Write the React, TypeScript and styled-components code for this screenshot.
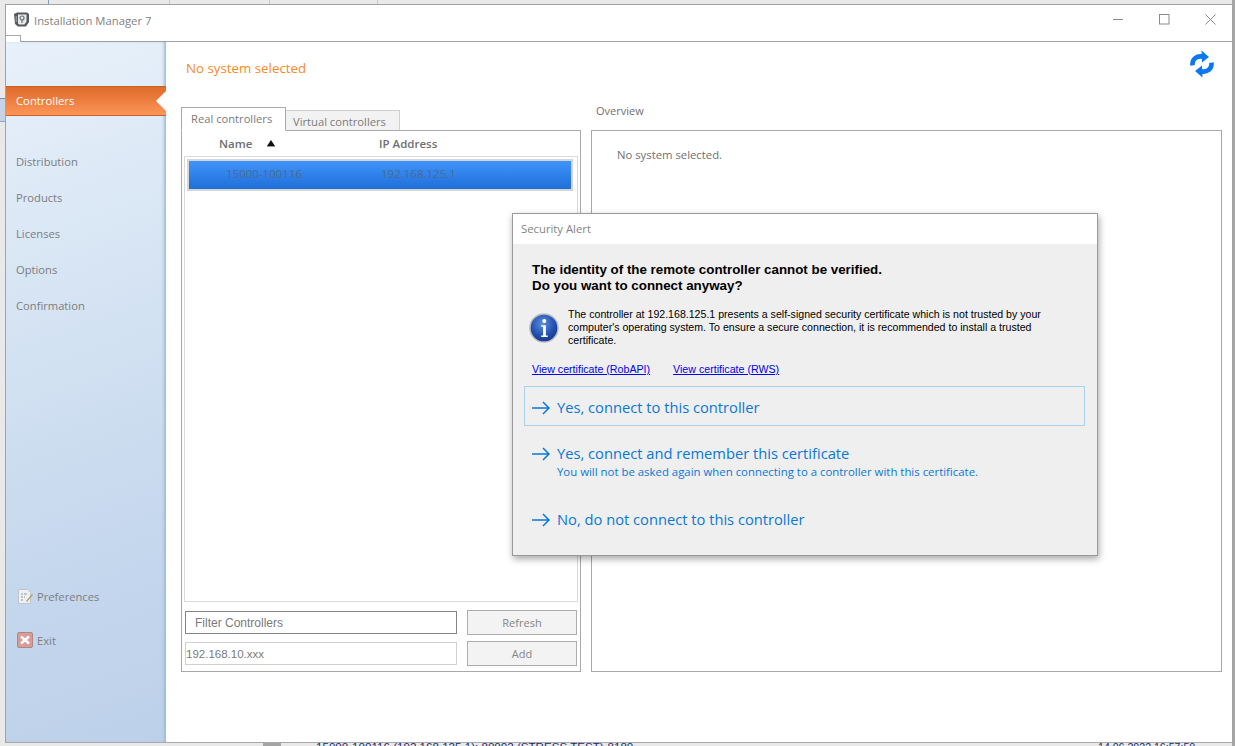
import React from "react";
import styled, { createGlobalStyle } from "styled-components";

const Global = createGlobalStyle`
  html, body { margin: 0; padding: 0; height: 100%; background: #e9e9ea; overflow: hidden; }
  #root { height: 100%; }
  * { box-sizing: border-box; }
`;

const UI = `"Open Sans", "Noto Sans", sans-serif`;
const Classic = `"Liberation Sans", Arial, sans-serif`;

const Screen = styled.div`
  position: relative;
  width: 1235px;
  height: 746px;
  padding: 4px 2px 2px 5px;
  font-family: ${UI};
  overflow: hidden;
`;

/* Fragments of the application behind the window, on the desktop canvas */
const BackDivider = styled.i<{ $x: number; $c?: string }>`
  position: absolute;
  top: 0;
  left: ${(p) => p.$x}px;
  width: 1px;
  height: 5px;
  background: ${(p) => p.$c ?? "#c9c9c9"};
`;

const BackBand = styled.i`
  position: absolute;
  left: 0;
  top: 98px;
  width: 6px;
  height: 24px;
  background: #c6d3e6;
  border-top: 1px solid #6f90bf;
  border-bottom: 1px solid #8aa5cc;
`;

const BackRightEdge = styled.i`
  position: absolute;
  right: 0;
  top: 0;
  bottom: 0;
  width: 3px;
  background: #a6a6a6;
`;

const BackLine = styled.span<{ $x: number; $size: number }>`
  position: absolute;
  top: 740px;
  left: ${(p) => p.$x}px;
  font-family: ${Classic};
  font-size: ${(p) => p.$size}px;
  line-height: 14px;
  white-space: nowrap;
  color: #1b2a6b;
`;

const BackThumb = styled.i`
  position: absolute;
  left: 263px;
  top: 743px;
  width: 18px;
  height: 3px;
  background: #a4a4a4;
`;

const Window = styled.div`
  position: relative;
  z-index: 1;
  width: 100%;
  height: 739px;
  display: flex;
  flex-direction: column;
  background: #fff;
  border: 1px solid #a3a3a3;
  border-bottom: 1px solid #a9a9a9;
`;

const TitleBar = styled.div`
  height: 37px;
  flex: none;
  display: flex;
  align-items: center;
  padding: 0 0 7px 8px;
  border-bottom: 1px solid #a0a0a0;
`;

const Notch = styled.i`
  position: absolute;
  left: 0;
  top: 30px;
  width: 15px;
  height: 7px;
  background: #fff;
  border-top: 1px solid #a9a9a9;
  border-right: 1px solid #a9a9a9;
`;

const TitleText = styled.span`
  margin-left: 5px;
  padding-top: 1px;
  font-size: 11.3px;
  color: #7f7f7f;
`;

const WindowControls = styled.div`
  margin-left: auto;
  display: flex;
  align-items: center;
  margin-right: -1px;
`;

const ControlButton = styled.div`
  width: 46px;
  height: 28px;
  display: flex;
  align-items: center;
  justify-content: center;
`;

const Body = styled.div`
  flex: 1;
  display: flex;
  min-height: 0;
`;

const Sidebar = styled.nav`
  width: 160px;
  flex: none;
  display: flex;
  flex-direction: column;
  background: linear-gradient(160deg, #e8f1fb 0%, #d9e6f4 30%, #c6d8ee 70%, #bcd0e9 100%);
  box-shadow: inset -3px 0 3px -1px #9dbbdc;
  padding-top: 44px;
`;

const ActiveItem = styled.div`
  position: relative;
  height: 30px;
  display: flex;
  align-items: center;
  padding: 0 0 1px 10px;
  font-size: 11.3px;
  color: #fff;
  background: linear-gradient(180deg, #df6a2b 0%, #fb9558 100%);
  border-top: 1px solid #c9602a;
  border-bottom: 1px solid #c9602a;
  margin-bottom: 27px;
  &::after {
    content: "";
    position: absolute;
    right: 0;
    top: 4px;
    border-style: solid;
    border-width: 10px 10px 10px 0;
    border-color: transparent #fff transparent transparent;
  }
`;

const NavItem = styled.div`
  height: 36px;
  display: flex;
  align-items: center;
  padding-left: 10px;
  font-size: 11.2px;
  color: #7d7d80;
`;

const SidebarSpacer = styled.div`
  flex: 1;
`;

const SidebarFoot = styled.div<{ $mb: number; $gap: number }>`
  display: flex;
  align-items: center;
  gap: ${(p) => p.$gap}px;
  padding-left: 11px;
  height: 18px;
  margin-bottom: ${(p) => p.$mb}px;
  font-size: 11.2px;
  color: #7d7d80;
`;

const Main = styled.main`
  flex: 1;
  display: flex;
  flex-direction: column;
  padding: 0 10px 0 15px;
  min-width: 0;
`;

const Header = styled.div`
  height: 65px;
  flex: none;
  display: flex;
  align-items: flex-start;
  justify-content: space-between;
  padding: 17px 8px 0 5px;
`;

const Status = styled.div`
  font-size: 13.3px;
  line-height: 18px;
  color: #f98a1e;
`;

const RefreshSvg = styled.svg`
  margin-top: -10px;
  flex: none;
`;

const Columns = styled.div`
  display: flex;
  gap: 10px;
  height: 565px;
`;

const LeftColumn = styled.section`
  width: 400px;
  flex: none;
  display: flex;
  flex-direction: column;
`;

const RightColumn = styled.section`
  flex: 1;
  display: flex;
  flex-direction: column;
`;

const Tabs = styled.div`
  height: 24px;
  display: flex;
  align-items: flex-end;
  flex: none;
  margin-bottom: -1px;
  position: relative;
  z-index: 1;
`;

const Tab = styled.div<{ $active?: boolean }>`
  height: ${(p) => (p.$active ? 24 : 21)}px;
  padding: ${(p) => (p.$active ? "0 0 2px 9px" : "2px 0 0 7px")};
  width: ${(p) => (p.$active ? 105 : 114)}px;
  display: flex;
  align-items: center;
  font-size: 11.2px;
  color: #7b7b7b;
  background: ${(p) => (p.$active ? "#fff" : "#f2f2f2")};
  border: 1px solid ${(p) => (p.$active ? "#a9a9a9" : "#cfcfcf")};
  border-bottom: ${(p) => (p.$active ? "1px solid #fff" : "1px solid #a9a9a9")};
  ${(p) => (p.$active ? "" : "border-left: none;")}
`;

const ListFrame = styled.div`
  flex: 1;
  display: flex;
  flex-direction: column;
  border: 1px solid #a9a9a9;
  padding: 0 2px 5px 2px;
  min-height: 0;
`;

const ListColumns = styled.div`
  height: 25px;
  flex: none;
  display: flex;
  align-items: center;
  padding-left: 35px;
  font-size: 11.5px;
  font-weight: 600;
  color: #6f6f72;
`;

const NameHead = styled.span`
  width: 48px;
`;

const SortMark = styled.span`
  width: 112px;
  display: flex;
  align-items: center;
  height: 10px;
`;

const ListBox = styled.div`
  flex: 1;
  display: flex;
  flex-direction: column;
  border: 1px solid #dadada;
  padding: 2px 4px 0 2px;
  margin-bottom: 8px;
  min-height: 0;
`;

const SelectedRow = styled.div`
  height: 32px;
  display: flex;
  align-items: center;
  border: 2px solid #d6d6d6;
  padding: 0 0 3px 37px;
  font-size: 11.5px;
  color: #4d6a8f;
  background: linear-gradient(180deg, #3f94fb 0%, #1f6fd8 100%);
  background-clip: padding-box;
`;

const RowName = styled.span`
  width: 155px;
`;

const FormRow = styled.div<{ $mb?: number }>`
  display: flex;
  justify-content: space-between;
  align-items: center;
  height: 25px;
  padding: 0 1px;
  margin-bottom: ${(p) => p.$mb ?? 0}px;
  flex: none;
`;

const Field = styled.div<{ $strong?: boolean }>`
  width: 272px;
  height: 23px;
  display: flex;
  align-items: center;
  padding-left: ${(p) => (p.$strong ? 9 : 0)}px;
  font-family: ${Classic};
  font-size: ${(p) => (p.$strong ? 12 : 11.5)}px;
  color: #7a7a7a;
  border: 1px solid ${(p) => (p.$strong ? "#858585" : "#d0d0d0")};
`;

const FormButton = styled.div`
  width: 110px;
  height: 25px;
  display: flex;
  align-items: center;
  justify-content: center;
  font-size: 11px;
  color: #858585;
  background: #f3f3f3;
  border: 1px solid #adadad;
`;

const OverviewLabel = styled.div`
  height: 27px;
  flex: none;
  padding: 0 0 0 5px;
  font-size: 11px;
  line-height: 16px;
  margin-top: -4px;
  color: #6f6f72;
`;

const OverviewBox = styled.div`
  flex: 1;
  border: 1px solid #a9a9a9;
  padding: 16px 25px;
  font-size: 11.3px;
  line-height: 16px;
  color: #6f6f72;
`;

const Dialog = styled.div`
  position: absolute;
  left: 506px;
  top: 208px;
  width: 586px;
  height: 343px;
  display: flex;
  flex-direction: column;
  background: #efefef;
  border: 1px solid #9a9a9a;
  box-shadow: 1px 3px 7px rgba(0, 0, 0, 0.35);
`;

const DialogTitle = styled.div`
  height: 30px;
  flex: none;
  display: flex;
  align-items: center;
  padding: 0 0 2px 8px;
  background: #fff;
  font-size: 11.3px;
  color: #848484;
`;

const DialogBody = styled.div`
  flex: 1;
  display: flex;
  flex-direction: column;
  padding: 18px 12px 0 11px;
`;

const Heading = styled.div`
  padding-left: 8px;
  font-family: ${Classic};
  font-size: 13.35px;
  font-weight: 700;
  line-height: 16px;
  color: #000;
`;

const InfoRow = styled.div`
  display: flex;
  align-items: center;
  gap: 9px;
  margin: 14px 0 0 5px;
`;

const InfoText = styled.div`
  font-family: ${Classic};
  font-size: 10.6px;
  line-height: 13px;
  width: 490px;
  color: #000;
`;

const LinkRow = styled.div`
  display: flex;
  gap: 23px;
  margin: 15px 0 10px 8px;
`;

const CertLink = styled.a`
  font-family: ${Classic};
  font-size: 10.65px;
  line-height: 14px;
  color: #0000ee;
  text-decoration: underline;
`;

const Choice = styled.div<{ $focused?: boolean; $h: number; $top: number }>`
  height: ${(p) => p.$h}px;
  flex: none;
  display: flex;
  align-items: flex-start;
  gap: 7px;
  padding: ${(p) => p.$top}px 0 0 7px;
  border: 1px solid ${(p) => (p.$focused ? "#a9d1ef" : "transparent")};
  color: #0a78d7;
`;

const ChoiceText = styled.div`
  display: flex;
  flex-direction: column;
`;

const ChoiceTitle = styled.div`
  font-size: 14.7px;
  line-height: 20px;
`;

const ChoiceNote = styled.div`
  font-size: 11.4px;
  line-height: 15px;
  margin-top: 1px;
`;

const ArrowSvg = styled.svg`
  margin-top: 4px;
  flex: none;
`;

const Arrow = () => (
  <ArrowSvg width="18" height="14" viewBox="0 0 18 14">
    <path d="M0 7H17M11 1l6 6-6 6" fill="none" stroke="#0a78d7" strokeWidth="1.5" />
  </ArrowSvg>
);

const AppIcon = () => (
  <svg width="15" height="15" viewBox="0 0 15 15">
    <path d="M0 2 3 .5h10L15 2v8l-3 4.5H4L1 12z" fill="#55585c" />
    <path d="M4 2.5h8.5v7l-2 3H5l-1-1z" fill="#e6e9ec" />
    <circle cx="8" cy="6" r="2" fill="none" stroke="#6c7074" strokeWidth="1.2" />
    <path d="M8 8v3" stroke="#6c7074" strokeWidth="1.2" />
    <path d="M1.5 4h1.6v6H1.5z" fill="#8d9094" />
  </svg>
);

const RefreshIcon = () => (
  <RefreshSvg width="24" height="30" viewBox="0 0 26 32">
    <g fill="none" stroke="#0b77f0" strokeWidth="5">
      <path d="M2.8 17.5C2 11 7 6.5 14.5 8" />
      <path d="M23.2 14.5C24 21 19 25.5 11.5 24" />
    </g>
    <path d="M12.5 1.5 20.5 8.5 13 14.5z" fill="#0b77f0" />
    <path d="M13.5 30.5 5.5 23.5 13 17.5z" fill="#0b77f0" />
  </RefreshSvg>
);

const PrefIcon = () => (
  <svg width="17" height="17" viewBox="0 0 17 17">
    <path d="M1.5 1.5h9l3 3v11h-12z" fill="#eef1f3" stroke="#c3c6c9" />
    <path d="M4 6h2M7 6h3M4 9h2M7 9h1M4 12h2" stroke="#8f979e" strokeWidth="1" />
    <path d="M9 13l6-7 1 1-6 7z" fill="#b2a26a" />
  </svg>
);

const ExitIcon = () => (
  <svg width="16" height="16" viewBox="0 0 16 16">
    <rect x="0.5" y="0.5" width="15" height="15" rx="1.5" fill="#d99a98" stroke="#a98886" />
    <path d="M4 4.5 12 11.5M12 4.5 4 11.5" stroke="#fff" strokeWidth="2.6" />
  </svg>
);

const SortTriangle = () => (
  <svg width="8" height="7" viewBox="0 0 8 7">
    <path d="M4 0 8 6H0z" fill="#111" />
    <path d="M0 6.5h8" stroke="#999" />
  </svg>
);

const InfoIcon = () => (
  <svg width="30" height="30" viewBox="0 0 32 32">
    <defs>
      <radialGradient id="orb" cx="45%" cy="35%" r="70%">
        <stop offset="0" stopColor="#5d8fe0" />
        <stop offset="0.6" stopColor="#2450b0" />
        <stop offset="1" stopColor="#12327f" />
      </radialGradient>
    </defs>
    <circle cx="16" cy="16" r="15" fill="url(#orb)" stroke="#b9bcc2" strokeWidth="1.6" />
    <circle cx="16.3" cy="8.6" r="2.2" fill="#fff" />
    <path d="M13 13h5v11h2v1.6h-7V24h2v-9.4h-2z" fill="#fff" />
  </svg>
);

export default function App() {
  return (
    <Screen>
      <Global />
      <BackDivider $x={48} $c="#7f9cc6" />
      <BackDivider $x={169} />
      <BackDivider $x={269} />
      <BackDivider $x={377} />
      <BackBand />
      <BackRightEdge />
      <BackThumb />
      <BackLine $x={316} $size={11.6}>15000-100116 (192.168.125.1): 80002 (STRESS TEST)-8180</BackLine>
      <BackLine $x={1098} $size={10.6}>14.06.2022 16:57:50</BackLine>
      <Window>
        <TitleBar>
          <AppIcon />
          <TitleText>Installation Manager 7</TitleText>
          <WindowControls>
            <ControlButton>
              <svg width="11" height="11" viewBox="0 0 11 11"><path d="M0 5.5h10" stroke="#8a8a8a" /></svg>
            </ControlButton>
            <ControlButton>
              <svg width="11" height="11" viewBox="0 0 11 11"><rect x=".5" y=".5" width="9.5" height="9.5" fill="none" stroke="#8a8a8a" /></svg>
            </ControlButton>
            <ControlButton>
              <svg width="11" height="11" viewBox="0 0 11 11"><path d="M.5.5l10 10M10.5.5l-10 10" stroke="#8a8a8a" /></svg>
            </ControlButton>
          </WindowControls>
        </TitleBar>
        <Notch />
        <Body>
          <Sidebar>
            <ActiveItem>Controllers</ActiveItem>
            <NavItem>Distribution</NavItem>
            <NavItem>Products</NavItem>
            <NavItem>Licenses</NavItem>
            <NavItem>Options</NavItem>
            <NavItem>Confirmation</NavItem>
            <SidebarSpacer />
            <SidebarFoot $mb={26} $gap={3}><PrefIcon />Preferences</SidebarFoot>
            <SidebarFoot $mb={93} $gap={4}><ExitIcon />Exit</SidebarFoot>
          </Sidebar>
          <Main>
            <Header>
              <Status>No system selected</Status>
              <RefreshIcon />
            </Header>
            <Columns>
              <LeftColumn>
                <Tabs>
                  <Tab $active>Real controllers</Tab>
                  <Tab>Virtual controllers</Tab>
                </Tabs>
                <ListFrame>
                  <ListColumns>
                    <NameHead>Name</NameHead>
                    <SortMark><SortTriangle /></SortMark>
                    <span>IP Address</span>
                  </ListColumns>
                  <ListBox>
                    <SelectedRow>
                      <RowName>15000-100116</RowName>
                      <span>192.168.125.1</span>
                    </SelectedRow>
                  </ListBox>
                  <FormRow $mb={6}>
                    <Field $strong>Filter Controllers</Field>
                    <FormButton>Refresh</FormButton>
                  </FormRow>
                  <FormRow>
                    <Field>192.168.10.xxx</Field>
                    <FormButton>Add</FormButton>
                  </FormRow>
                </ListFrame>
              </LeftColumn>
              <RightColumn>
                <OverviewLabel>Overview</OverviewLabel>
                <OverviewBox>No system selected.</OverviewBox>
              </RightColumn>
            </Columns>
          </Main>
        </Body>
        <Dialog>
          <DialogTitle>Security Alert</DialogTitle>
          <DialogBody>
            <Heading>
              The identity of the remote controller cannot be verified.
              <br />
              Do you want to connect anyway?
            </Heading>
            <InfoRow>
              <InfoIcon />
              <InfoText>
                The controller at 192.168.125.1 presents a self-signed security certificate which is not trusted by your computer's operating system. To ensure a secure connection, it is recommended to install a trusted certificate.
              </InfoText>
            </InfoRow>
            <LinkRow>
              <CertLink>View certificate (RobAPI)</CertLink>
              <CertLink>View certificate (RWS)</CertLink>
            </LinkRow>
            <Choice $focused $h={40} $top={10}>
              <Arrow />
              <ChoiceText><ChoiceTitle>Yes, connect to this controller</ChoiceTitle></ChoiceText>
            </Choice>
            <Choice $h={66} $top={16}>
              <Arrow />
              <ChoiceText>
                <ChoiceTitle>Yes, connect and remember this certificate</ChoiceTitle>
                <ChoiceNote>You will not be asked again when connecting to a controller with this certificate.</ChoiceNote>
              </ChoiceText>
            </Choice>
            <Choice $h={40} $top={16}>
              <Arrow />
              <ChoiceText><ChoiceTitle>No, do not connect to this controller</ChoiceTitle></ChoiceText>
            </Choice>
          </DialogBody>
        </Dialog>
      </Window>
    </Screen>
  );
}
